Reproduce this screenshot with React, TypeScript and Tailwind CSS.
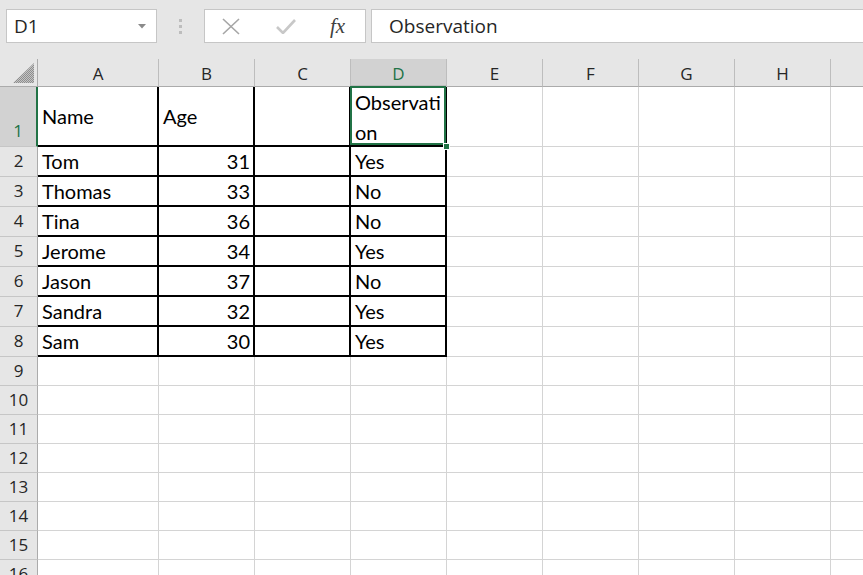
import React from 'react'

const GREEN = 'border-[#217346]'

const columns = ['A', 'B', 'C', 'D', 'E', 'F', 'G', 'H', '']
const colWidths = ['w-[121px]', 'w-[96px]', 'w-[96px]', 'w-[96px]', 'w-[96px]', 'w-[96px]', 'w-[96px]', 'w-[96px]', 'w-[96px]']

const people: [string, number, string][] = [
  ['Tom', 31, 'Yes'],
  ['Thomas', 33, 'No'],
  ['Tina', 36, 'No'],
  ['Jerome', 34, 'Yes'],
  ['Jason', 37, 'No'],
  ['Sandra', 32, 'Yes'],
  ['Sam', 30, 'Yes'],
]

function FormulaBar() {
  return (
    <div className="h-[59px] bg-[#e6e6e6] flex items-start pt-[9px] font-['Open_Sans',sans-serif] text-[19px] text-[#262626]">
      {/* Name box */}
      <div className="ml-[6px] w-[151px] h-[34px] bg-white border border-[#c6c6c6] flex items-center justify-between pl-[7px] pr-[10px]">
        <span className="leading-none">D1</span>
        <svg width="8" height="5" viewBox="0 0 8 5">
          <path d="M0 0h8L4 4.5z" fill="#8a8a8a" />
        </svg>
      </div>

      {/* grip */}
      <div className="w-[47px] h-[34px] flex flex-col items-center justify-center gap-[3px]">
        <div className="w-[3px] h-[3px] bg-[#bdbdbd]" />
        <div className="w-[3px] h-[3px] bg-[#bdbdbd]" />
        <div className="w-[3px] h-[3px] bg-[#bdbdbd]" />
      </div>

      {/* cancel / enter / fx */}
      <div className="w-[162px] h-[34px] bg-white border border-[#c6c6c6] flex items-center">
        <svg className="ml-[17px]" width="18" height="17" viewBox="0 0 18 17">
          <path d="M1 1l16 15M17 1L1 16" stroke="#a6a6a6" strokeWidth="1.6" fill="none" />
        </svg>
        <svg className="ml-[36px]" width="20" height="15" viewBox="0 0 20 15">
          <path d="M1 8l6 6L19 1" stroke="#c8c8c8" strokeWidth="2.6" fill="none" />
        </svg>
        <span className="ml-[34px] font-['Liberation_Serif',serif] italic text-[21px] leading-none text-[#404040]">fx</span>
      </div>

      {/* formula input */}
      <div className="ml-[5px] flex-1 h-[34px] bg-white border border-r-0 border-[#c6c6c6] flex items-center pl-[17px]">
        <span className="leading-none">Observation</span>
      </div>
    </div>
  )
}

function HeaderRow() {
  return (
    <div className="flex h-[28px] font-['Open_Sans',sans-serif] text-[17px] text-[#262626]">
      <div className="w-[38px] shrink-0 bg-[#e6e6e6] border-r border-b border-[#ababab] flex items-end justify-end pr-[3px] pb-[3px]">
        <svg width="21" height="20" viewBox="0 0 21 20">
          <defs>
            <pattern id="hatch" width="2" height="2" patternUnits="userSpaceOnUse">
              <rect width="2" height="2" fill="#c4c4c4" />
              <rect width="1" height="1" fill="#8e8e8e" />
              <rect x="1" y="1" width="1" height="1" fill="#8e8e8e" />
            </pattern>
          </defs>
          <path d="M21 0V20H0z" fill="url(#hatch)" />
        </svg>
      </div>
      {columns.map((c, i) =>
        c === 'D' ? (
          <div
            key={i}
            className={`${colWidths[i]} shrink-0 bg-[#d2d2d2] border-r border-[#bdbdbd] border-b-2 ${GREEN} text-center leading-[30px] text-[#217346]`}
          >
            {c}
          </div>
        ) : (
          <div
            key={i}
            className={`${colWidths[i]} shrink-0 bg-[#e6e6e6] border-r border-[#bdbdbd] border-b border-b-[#ababab] text-center leading-[30px]`}
          >
            {c}
          </div>
        )
      )}
    </div>
  )
}

function RowHeader({ n, selected }: { n: number; selected?: boolean }) {
  if (selected) {
    return (
      <div className={`w-[38px] shrink-0 bg-[#d2d2d2] border-r-2 ${GREEN} border-b border-b-[#c6c6c6] flex items-end justify-center leading-[30px] text-[#217346]`}>
        {n}
      </div>
    )
  }
  return (
    <div className="w-[38px] shrink-0 bg-[#e6e6e6] border-r border-r-[#ababab] border-b border-b-[#c6c6c6] text-center leading-[28px]">
      {n}
    </div>
  )
}

function EmptyCells({ from }: { from: number }) {
  return (
    <>
      {colWidths.slice(from).map((w, i) => (
        <div key={i} className={`${w} shrink-0 border-r border-b border-[#d4d4d4]`} />
      ))}
    </>
  )
}

export default function App() {
  return (
    <div className="w-[863px] h-[575px] overflow-hidden bg-white">
      <FormulaBar />
      <HeaderRow />

      <div className="font-['Lato',sans-serif] text-[20px] text-black">
        {/* Row 1: headings */}
        <div className="flex h-[60px]">
          <div className="font-['Open_Sans',sans-serif] text-[17px] flex">
            <RowHeader n={1} selected />
          </div>
          <div className="w-[121px] shrink-0 border-r-2 border-b-2 border-black pl-[4px] pt-[15px] leading-[28px]">
            Name
          </div>
          <div className="w-[96px] shrink-0 border-r-2 border-b-2 border-black pl-[4px] pt-[15px] leading-[28px]">
            Age
          </div>
          <div className="w-[96px] shrink-0 border-r-2 border-b-2 border-black" />
          <div className="relative w-[96px] shrink-0 border-r-2 border-b-2 border-black pl-[4px] leading-[30px] break-all">
            Observation
            <div className={`absolute -left-px -top-px -right-px bottom-0 border-2 ${GREEN}`} />
            <div className="absolute left-[92px] top-[56px] w-[7px] h-[7px] bg-[#217346] border border-white" />
          </div>
          <EmptyCells from={4} />
        </div>

        {/* Rows 2-8: data */}
        {people.map(([name, age, obs], i) => (
          <div key={name} className="flex h-[30px]">
            <div className="font-['Open_Sans',sans-serif] text-[17px] text-[#262626] flex">
              <RowHeader n={i + 2} />
            </div>
            <div className="w-[121px] shrink-0 border-r-2 border-b-2 border-black pl-[4px] leading-[28px]">{name}</div>
            <div className="w-[96px] shrink-0 border-r-2 border-b-2 border-black pr-[3px] text-right leading-[28px]">{age}</div>
            <div className="w-[96px] shrink-0 border-r-2 border-b-2 border-black" />
            <div className="w-[96px] shrink-0 border-r-2 border-b-2 border-black pl-[4px] leading-[28px]">{obs}</div>
            <EmptyCells from={4} />
          </div>
        ))}

        {/* Rows 9-16: empty */}
        {[9, 10, 11, 12, 13, 14, 15, 16].map((n) => (
          <div key={n} className="flex h-[29px]">
            <div className="font-['Open_Sans',sans-serif] text-[17px] text-[#262626] flex">
              <RowHeader n={n} />
            </div>
            <EmptyCells from={0} />
          </div>
        ))}
      </div>
    </div>
  )
}
